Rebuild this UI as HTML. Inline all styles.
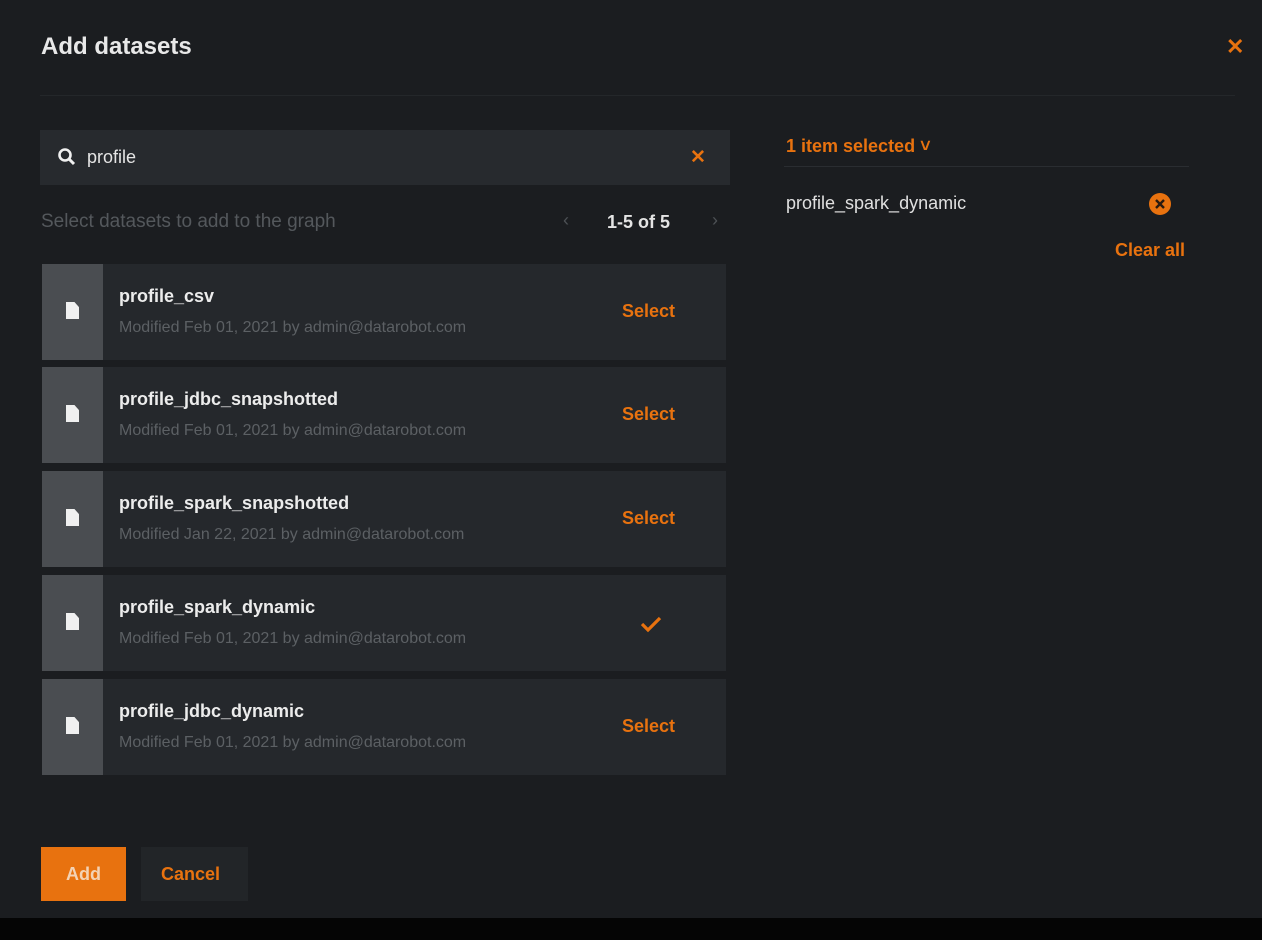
<!DOCTYPE html>
<html><head><style>
body{margin:0;width:1262px;height:940px;background:#1b1d20;font-family:"Liberation Sans",sans-serif;position:relative;overflow:hidden}
.a{position:absolute}
.bar{left:0;top:918px;width:1262px;height:22px;background:#050505}
h1{position:absolute;left:41px;top:33px;margin:0;font-size:24px;font-weight:bold;color:#e8e8e8}
.line{left:40px;top:95px;width:1195px;height:1px;background:#24272a}
.search{left:40px;top:130px;width:690px;height:55px;background:#272a2e}
.card{left:42px;width:684px;height:96px;background:#25282c}
.card .ic{position:absolute;left:0;top:0;width:61px;height:96px;background:#4a4d51}
.card .doc{position:absolute;left:24px;top:38px;width:13px;height:17px;background:#f0f0f0;clip-path:polygon(0 0,65% 0,100% 30%,100% 100%,0 100%)}
.card .t{position:absolute;left:77px;top:22px;font-size:18px;font-weight:bold;color:#ececec}
.card .m{position:absolute;left:77px;top:55px;font-size:16px;color:#5c6064}
.card .s{position:absolute;left:580px;top:37px;font-size:18px;font-weight:bold;color:#e8720f}
.or{color:#e8720f}
</style></head><body>
<h1>Add datasets</h1>
<div class="a or" style="left:1226px;top:34px;font-size:22px;font-weight:bold">✕</div>
<div class="a line"></div>
<div class="a search">
<svg class="a" style="left:17px;top:17px" width="20" height="20" viewBox="0 0 20 20"><circle cx="8" cy="8" r="5.5" stroke="#f0f0f0" stroke-width="2.6" fill="none"/><path d="M12 12l5 5" stroke="#f0f0f0" stroke-width="3"/></svg>
<div class="a" style="left:47px;top:17px;font-size:18px;color:#e4e4e4">profile</div>
<div class="a or" style="left:650px;top:16px;font-size:19px;font-weight:bold">✕</div>
</div>
<div class="a" style="left:41px;top:211px;font-size:19px;color:#54585c">Select datasets to add to the graph</div>
<div class="a" style="left:563px;top:210px;font-size:18px;color:#4d5155">‹</div>
<div class="a" style="left:607px;top:212px;font-size:18px;font-weight:bold;color:#e4e4e4">1-5 of 5</div>
<div class="a" style="left:712px;top:210px;font-size:18px;color:#4d5155">›</div>

<div class="a card" style="top:264px"><div class="ic"><div class="doc"></div></div><div class="t">profile_csv</div><div class="m">Modified Feb 01, 2021 by admin@datarobot.com</div><div class="s">Select</div></div>
<div class="a card" style="top:367px"><div class="ic"><div class="doc"></div></div><div class="t">profile_jdbc_snapshotted</div><div class="m">Modified Feb 01, 2021 by admin@datarobot.com</div><div class="s">Select</div></div>
<div class="a card" style="top:471px"><div class="ic"><div class="doc"></div></div><div class="t">profile_spark_snapshotted</div><div class="m">Modified Jan 22, 2021 by admin@datarobot.com</div><div class="s">Select</div></div>
<div class="a card" style="top:575px"><div class="ic"><div class="doc"></div></div><div class="t">profile_spark_dynamic</div><div class="m">Modified Feb 01, 2021 by admin@datarobot.com</div><svg class="a" style="left:597px;top:40px" width="24" height="18" viewBox="0 0 24 18"><path d="M3 9l6 6L21 3" stroke="#e8720f" stroke-width="3.2" fill="none"/></svg></div>
<div class="a card" style="top:679px"><div class="ic"><div class="doc"></div></div><div class="t">profile_jdbc_dynamic</div><div class="m">Modified Feb 01, 2021 by admin@datarobot.com</div><div class="s">Select</div></div>

<div class="a or" style="left:786px;top:136px;font-size:18px;font-weight:bold">1 item selected ˅</div>
<div class="a" style="left:784px;top:166px;width:405px;height:1px;background:#2a2d31"></div>
<div class="a" style="left:786px;top:193px;font-size:18px;color:#e0e0e0">profile_spark_dynamic</div>
<svg class="a" style="left:1148px;top:192px" width="24" height="24" viewBox="0 0 24 24"><circle cx="12" cy="12" r="11" fill="#e8720f"/><path d="M8 8l8 8M16 8l-8 8" stroke="#2a1a10" stroke-width="2.4"/></svg>
<div class="a or" style="left:1115px;top:240px;font-size:18px;font-weight:bold">Clear all</div>

<div class="a" style="left:41px;top:847px;width:85px;height:54px;background:#e8720f"></div>
<div class="a" style="left:66px;top:864px;font-size:18px;font-weight:bold;color:#f3d2b4">Add</div>
<div class="a" style="left:141px;top:847px;width:107px;height:54px;background:#222528"></div>
<div class="a or" style="left:161px;top:864px;font-size:18px;font-weight:bold">Cancel</div>
<div class="a bar"></div>
</body></html>
